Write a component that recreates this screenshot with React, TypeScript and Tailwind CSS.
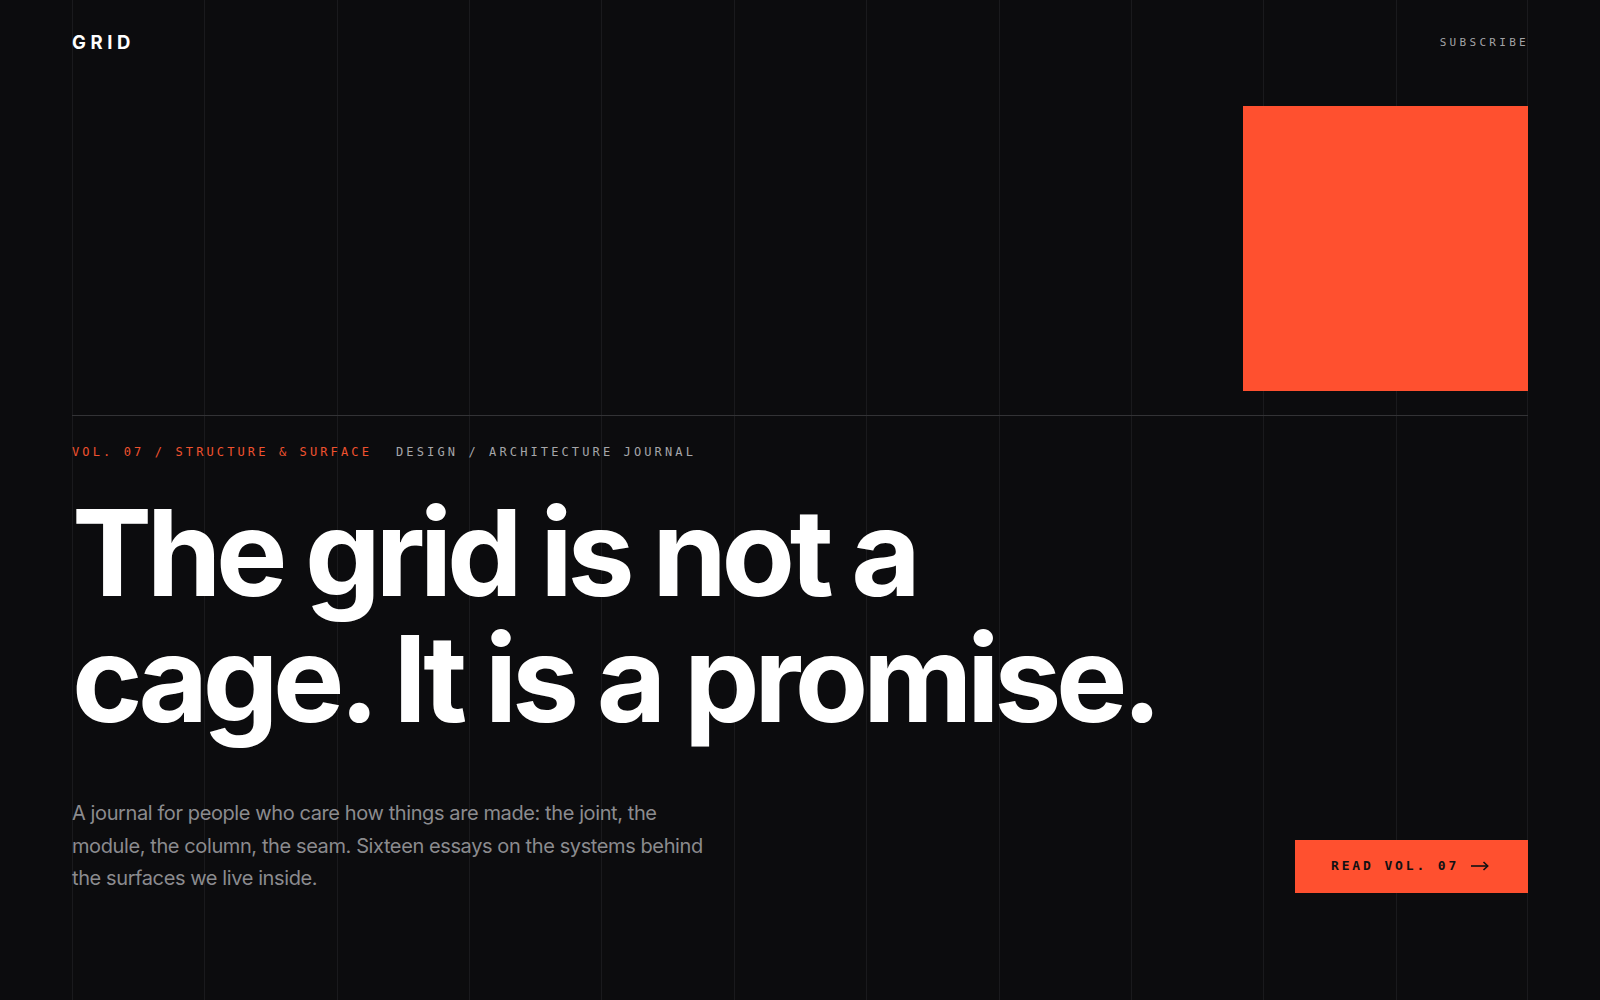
import React from 'react'

const mono = "font-['DejaVu_Sans_Mono','Liberation_Mono',monospace]"

function GridLines() {
  // 11 columns, 12 hairlines across the content width
  return (
    <div className="pointer-events-none absolute inset-y-0 left-[72px] right-[72px] grid grid-cols-11">
      {Array.from({ length: 11 }).map((_, i) => (
        <div
          key={i}
          className={i === 10 ? 'border-x border-[#1a1a1d]' : 'border-l border-[#1a1a1d]'}
        />
      ))}
    </div>
  )
}

function ArrowRight() {
  return (
    <svg width="18" height="10" viewBox="0 0 18 10" fill="none" stroke="currentColor" strokeWidth="1.6">
      <path d="M0 5h16.5" />
      <path d="M12.5 1l4.2 4-4.2 4" strokeLinejoin="miter" />
    </svg>
  )
}

export default function App() {
  return (
    <div className="relative min-h-screen w-full overflow-hidden bg-[#0c0c0e] font-['Inter','Liberation_Sans',sans-serif] text-white">
      <GridLines />

      <div className="relative px-[72px]">

        {/* Header */}
        <header className="flex h-[86px] items-center justify-between">
          <span className="text-[18.5px] font-bold tracking-[0.25em] text-white">GRID</span>
          <a className={`${mono} -mr-px text-[11px] tracking-[0.3em] text-[#a3a3a6]`}>SUBSCRIBE</a>
        </header>

        {/* Cover block */}
        <div className="mt-5 flex justify-end">
          <div className="h-[285px] w-[285px] bg-[#ff502f]" />
        </div>

        <div className="mt-6 h-px bg-[#333336]" />

        {/* Kicker */}
        <div className={`${mono} mt-7 flex gap-6 text-[12px] leading-4 tracking-[0.26em]`}>
          <span className="text-[#f0522f]">VOL. 07 / STRUCTURE &amp; SURFACE</span>
          <span className="text-[#a6a6a9]">DESIGN / ARCHITECTURE JOURNAL</span>
        </div>

        {/* Headline */}
        <h1 className="mt-[30px] text-[120px] font-bold leading-[126px] tracking-[-0.045em] text-white">
          The grid is not a
          <br />
          cage. It is a promise.
        </h1>

        {/* Intro + CTA */}
        <div className="mt-[55px] flex items-end justify-between">
          <p className="text-[20px] leading-[32.5px] tracking-[-0.02em] text-[#8b8b8e]">
            A journal for people who care how things are made: the joint, the
            <br />
            module, the column, the seam. Sixteen essays on the systems behind
            <br />
            the surfaces we live inside.
          </p>
          <button
            className={`${mono} mb-[2px] flex h-[53px] w-[233px] items-center gap-3 bg-[#ff502f] pl-9 text-[13px] font-bold tracking-[0.22em] text-[#111113]`}
          >
            READ VOL. 07
            <ArrowRight />
          </button>
        </div>
      </div>
    </div>
  )
}
